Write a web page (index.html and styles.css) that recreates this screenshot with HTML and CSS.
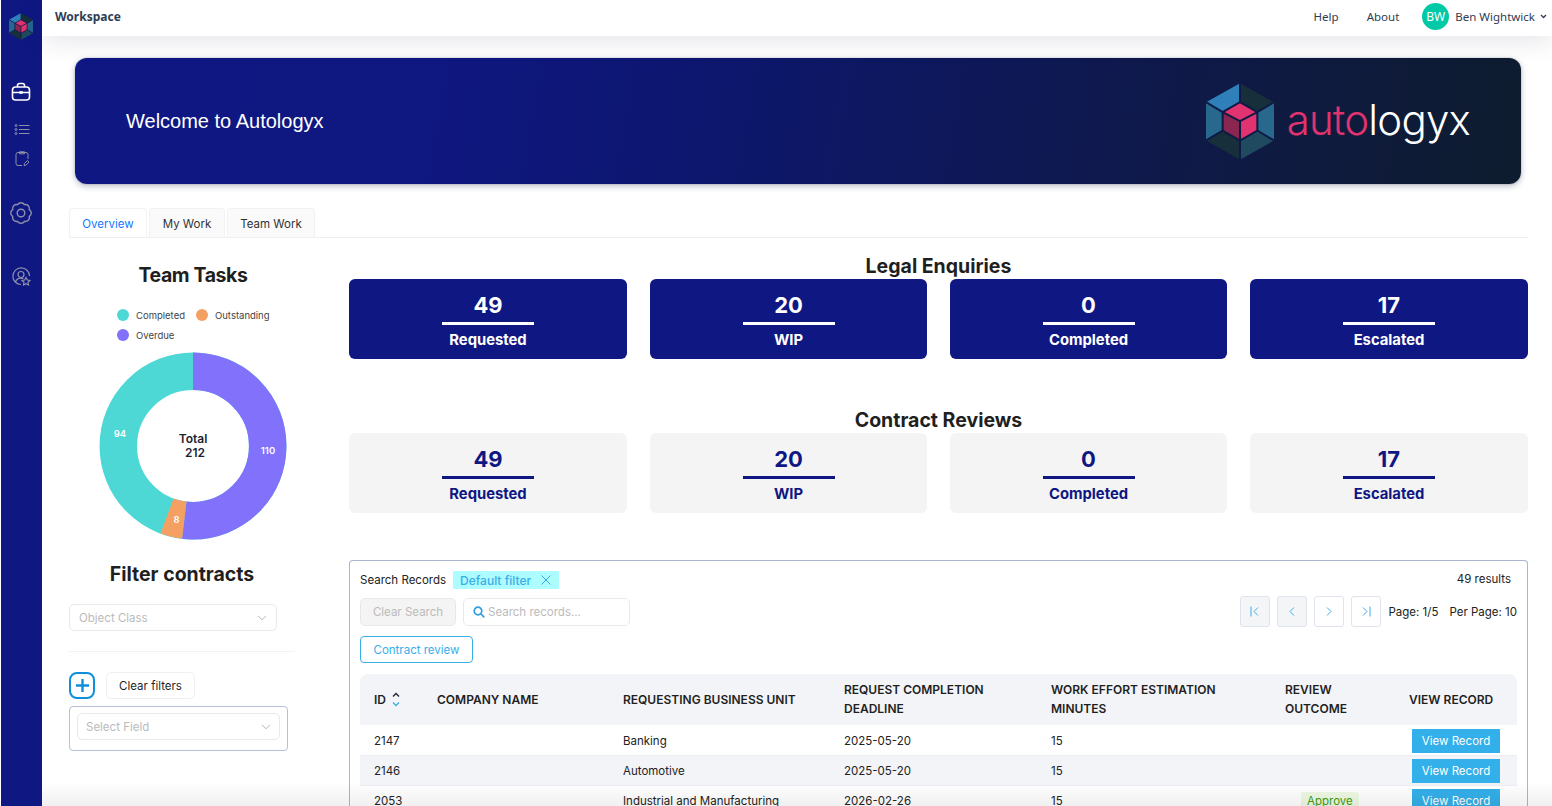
FILE: index.html
```html
<!DOCTYPE html>
<html lang="en">
<head>
    <meta charset="UTF-8">
    <meta name="viewport" content="width=device-width, initial-scale=1.0">
    <title>Workspace</title>
    <link rel="stylesheet" href="styles.css">
</head>
<body>
    <svg class="defs" width="0" height="0">
        <symbol id="hex-logo" viewBox="0 0 204 230">
            <path fill="#2f80ba" d="M102 0 0 57 50 87 102 57z"/>
            <path fill="#162f3a" d="M102 0 204 57 154 87 102 57z"/>
            <path fill="#27688c" d="M204 57V172L154 142V87z"/>
            <path fill="#1f4a60" d="M204 172 102 230V172L154 142z"/>
            <path fill="#162f3a" d="M0 172 102 230V172L50 142z"/>
            <path fill="#27688c" d="M0 57V172L50 142V87z"/>
            <path fill="#e0336f" d="M102 57 154 87 102 114 50 87z"/>
            <path fill="#8a2650" d="M50 87 102 114V172L50 142z"/>
            <path fill="#e0336f" d="M154 87 102 114V172L154 142z"/>
            <path fill="none" stroke="#0e1a45" stroke-width="6" d="M102 0V57M204 57 154 87M204 172 154 142M102 230V172M0 172 50 142M0 57 50 87M102 57 154 87V142L102 172 50 142V87zM50 87 102 114 154 87M102 114V172"/>
        </symbol>
    </svg>

    <div class="app">
        <aside class="sidebar">
            <svg class="side-logo" width="24" height="27"><use href="#hex-logo"/></svg>
            <svg class="side-icon icon-case" width="20" height="20" viewBox="0 0 20 20" fill="none" stroke="#fff" stroke-width="1.6">
                <rect x="1.5" y="5" width="17" height="13" rx="3"/>
                <path d="M6.5 5V3.5a2 2 0 0 1 2-2h3a2 2 0 0 1 2 2V5M1.5 10.5h17"/>
                <rect x="8.7" y="9.5" width="2.6" height="2" fill="#fff" stroke-width=".6"/>
            </svg>
            <svg class="side-icon icon-list" width="16" height="11" viewBox="0 0 16 11" fill="none" stroke="#8f90a8" stroke-width="1">
                <path d="M5 1.500h10.500M5 5.500h10.500M5 9.500h10.500"/>
                <circle cx="2" cy="1.500" r="1"/><circle cx="2" cy="5.500" r="1"/><circle cx="2" cy="9.500" r="1"/>
            </svg>
            <svg class="side-icon icon-clip" width="15" height="16" viewBox="0 0 15 16" fill="none" stroke="#8f90a8" stroke-width="1">
                <path d="M7 14.500H3a2 2 0 0 1-2-2V3.500a2 2 0 0 1 2-2h8a2 2 0 0 1 2 2V8"/>
                <path d="M4.500 .8h5v2h-5z"/>
                <path d="m9 14.500 .4-2 3-3 1.600 1.600-3 3z"/>
            </svg>
            <svg class="side-icon icon-gear" width="22" height="22" viewBox="0 0 22 22" fill="none" stroke="#8f90a8" stroke-width="1.400">
                <path d="M19.310 7.560A4 4 0 0 1 19.310 14.440 4 4 0 0 1 14.440 19.310 4 4 0 0 1 7.560 19.310 4 4 0 0 1 2.690 14.440 4 4 0 0 1 2.690 7.560 4 4 0 0 1 7.560 2.690 4 4 0 0 1 14.440 2.690 4 4 0 0 1 19.310 7.560z"/>
                <circle cx="11" cy="11" r="3.800"/>
            </svg>
            <svg class="side-icon icon-user" width="19" height="19" viewBox="0 0 19 19" fill="none" stroke="#8f90a8" stroke-width="1.200">
                <path d="M9 17.500A8.300 8.300 0 1 1 17.500 9"/>
                <circle cx="9" cy="7.500" r="3"/>
                <path d="M3.500 15c.8-2.500 2.800-3.800 5.500-3.800 1 0 1.600.1 2.300.4"/>
                <path d="m14 10.500 1.300 2.500 2.700.4-2 1.900.5 2.700-2.500-1.300-2.500 1.300.5-2.700-2-1.900 2.700-.4z"/>
            </svg>
        </aside>

        <div class="main">
            <header class="topbar">
                <span class="brand">Workspace</span>
                <nav class="topnav">
                    <a class="nav-help">Help</a>
                    <a class="nav-about">About</a>
                    <span class="avatar">BW</span>
                    <span class="username">Ben Wightwick</span>
                    <svg class="caret" width="7" height="5" viewBox="0 0 7 5" fill="none" stroke="#2f3c55" stroke-width="1.300"><path d="m1 1 2.500 2.500L6 1"/></svg>
                </nav>
            </header>

            <div class="content">
                <section class="banner">
                    <h1>Welcome to Autologyx</h1>
                    <div class="banner-logo">
                        <svg width="68" height="77"><use href="#hex-logo"/></svg>
                        <span class="wordmark"><span class="pink">auto</span>logyx</span>
                    </div>
                </section>

                <div class="tabs">
                    <div class="tab active">Overview</div>
                    <div class="tab">My Work</div>
                    <div class="tab tab-last">Team Work</div>
                </div>

                <div class="columns">
                    <div class="left">
                        <h2 class="chart-title">Team Tasks</h2>
                        <div class="legend">
                            <span class="legend-item"><i class="dot teal"></i>Completed</span>
                            <span class="legend-item"><i class="dot orange"></i>Outstanding</span>
                            <span class="legend-item"><i class="dot purple"></i>Overdue</span>
                        </div>
                        <svg class="donut" width="188" height="188" viewBox="0 0 188 188">
                            <g fill="none" stroke-width="37.500" transform="rotate(-90 94 94)">
                                <circle cx="94" cy="94" r="74.700" pathLength="212" stroke="#4dd8d6"/>
                                <circle cx="94" cy="94" r="74.700" pathLength="212" stroke="#8271fa" stroke-dasharray="110 102"/>
                                <circle cx="94" cy="94" r="74.700" pathLength="212" stroke="#f4a062" stroke-dasharray="8 204" stroke-dashoffset="-110"/>
                            </g>
                            <g class="donut-val">
                                <text x="21" y="85">94</text>
                                <text x="169" y="102">110</text>
                                <text x="77.500" y="171">8</text>
                            </g>
                            <g class="donut-total">
                                <text x="94" y="91">Total</text>
                                <text x="96" y="105">212</text>
                            </g>
                        </svg>

                        <div class="filters">
                            <h2 class="filter-title">Filter contracts</h2>
                            <div class="select select-class">
                                Object Class
                                <svg width="10" height="6" viewBox="0 0 10 6" fill="none" stroke="#b4b4b4"><path d="m1 .8 4 4 4-4"/></svg>
                            </div>
                            <hr class="divider">
                            <div class="filter-actions">
                                <button class="add-btn">
                                    <svg width="15" height="15" viewBox="0 0 15 15" stroke="#0f8fdb" stroke-width="2.400"><path d="M7.500 1v13M1 7.500h13"/></svg>
                                </button>
                                <button class="clear-btn">Clear filters</button>
                            </div>
                            <div class="field-box">
                                <div class="select">
                                    Select Field
                                    <svg width="10" height="6" viewBox="0 0 10 6" fill="none" stroke="#b4b4b4"><path d="m1 .8 4 4 4-4"/></svg>
                                </div>
                            </div>
                        </div>
                    </div>

                    <div class="right">
                        <h2 class="group-title">Legal Enquiries</h2>
                        <div class="cards">
                            <div class="card dark"><b>49</b><i></i><span>Requested</span></div>
                            <div class="card dark"><b>20</b><i></i><span>WIP</span></div>
                            <div class="card dark"><b>0</b><i></i><span>Completed</span></div>
                            <div class="card dark"><b>17</b><i></i><span>Escalated</span></div>
                        </div>

                        <h2 class="group-title second">Contract Reviews</h2>
                        <div class="cards">
                            <div class="card"><b>49</b><i></i><span>Requested</span></div>
                            <div class="card"><b>20</b><i></i><span>WIP</span></div>
                            <div class="card"><b>0</b><i></i><span>Completed</span></div>
                            <div class="card"><b>17</b><i></i><span>Escalated</span></div>
                        </div>

                        <div class="records">
                            <div class="records-top">
                                <span>Search Records</span>
                                <span class="chip">Default filter
                                    <svg width="10" height="10" viewBox="0 0 9 9" stroke="#3aaee8" stroke-width=".9"><path d="m.5.5 8 8M8.500.5l-8 8"/></svg>
                                </span>
                                <span class="results">49 results</span>
                            </div>
                            <div class="records-tools">
                                <button class="clear-search">Clear Search</button>
                                <div class="search-box">
                                    <svg width="12" height="12" viewBox="0 0 12 12" fill="none" stroke="#2f9fe0" stroke-width="1.700"><circle cx="5" cy="5" r="3.800"/><path d="m8 8 3.300 3.300"/></svg>
                                    Search records...
                                </div>
                                <div class="pager">
                                    <button class="page-btn off"><svg width="10" height="11" viewBox="0 0 10 11" fill="none" stroke="#3aaee8"><path d="M1 .5v10M8 1.500 4 5.500l4 4"/></svg></button>
                                    <button class="page-btn off"><svg width="6" height="11" viewBox="0 0 6 11" fill="none" stroke="#3aaee8"><path d="M5 1.500 1 5.500l4 4"/></svg></button>
                                    <button class="page-btn"><svg width="6" height="11" viewBox="0 0 6 11" fill="none" stroke="#3aaee8"><path d="m1 1.500 4 4-4 4"/></svg></button>
                                    <button class="page-btn"><svg width="10" height="11" viewBox="0 0 10 11" fill="none" stroke="#3aaee8"><path d="M9 .5v10M2 1.500l4 4-4 4"/></svg></button>
                                </div>
                                <span class="page-info">Page: 1/5</span>
                                <span class="page-info per">Per Page: 10</span>
                            </div>
                            <button class="type-btn">Contract review</button>

                            <table class="grid">
                                <colgroup>
                                    <col class="c-id"><col class="c-company"><col class="c-unit"><col class="c-date"><col class="c-effort"><col class="c-outcome"><col>
                                </colgroup>
                                <thead>
                                    <tr>
                                        <th>ID <svg class="sort" width="8" height="15" viewBox="0 0 8 15" fill="none" stroke-width="1.300"><path stroke="#1d2433" d="m1 4.500 3-3 3 3"/><path stroke="#3aaee8" d="m1 10.500 3 3 3-3"/></svg></th>
                                        <th>COMPANY NAME</th>
                                        <th>REQUESTING BUSINESS UNIT</th>
                                        <th>REQUEST COMPLETION DEADLINE</th>
                                        <th>WORK EFFORT ESTIMATION MINUTES</th>
                                        <th>REVIEW OUTCOME</th>
                                        <th>VIEW RECORD</th>
                                    </tr>
                                </thead>
                                <tbody>
                                    <tr>
                                        <td>2147</td><td></td><td>Banking</td><td>2025-05-20</td><td>15</td><td></td>
                                        <td><button class="view-btn">View Record</button></td>
                                    </tr>
                                    <tr class="alt">
                                        <td>2146</td><td></td><td>Automotive</td><td>2025-05-20</td><td>15</td><td></td>
                                        <td><button class="view-btn">View Record</button></td>
                                    </tr>
                                    <tr>
                                        <td>2053</td><td></td><td>Industrial and Manufacturing</td><td>2026-02-26</td><td>15</td>
                                        <td><span class="tag">Approve</span></td>
                                        <td><button class="view-btn">View Record</button></td>
                                    </tr>
                                </tbody>
                            </table>
                        </div>
                    </div>
                </div>
            </div>
        </div>
    </div>
    <div class="bottom-fade"></div>
</body>
</html>
```

FILE: styles.css
```css
* {
    box-sizing: border-box;
}
html, body {
    height: 806px;
    margin: 0;
    overflow: hidden;
}
body {
    background-color: #fff;
    font-family: Inter, sans-serif;
    color: #1f1f1f;
    position: relative;
}
h1, h2 {
    margin: 0;
}
button {
    font-family: inherit;
    cursor: pointer;
}
.defs {
    display: block;
    height: 0;
}
.app {
    display: flex;
    height: 806px;
    overflow: hidden;
}

/* sidebar */
.sidebar {
    width: 41px;
    margin-left: 1px;
    flex-shrink: 0;
    background-color: #0f1783;
    display: flex;
    flex-direction: column;
    align-items: center;
    padding-top: 13px;
}
.side-logo {
    margin-left: -2px;
}
.side-icon {
    display: block;
}
.icon-case {
    margin: 42px 0 0 -2px;
}
.icon-list {
    margin: 22px 0 0 1px;
}
.icon-clip {
    margin: 16px 0 0 1px;
}
.icon-gear {
    margin: 35px 0 0 -1px;
}
.icon-user {
    margin: 43px 0 0 0;
}

/* top bar */
.main {
    flex: 1;
    min-width: 0;
}
.topbar {
    height: 36px;
    display: flex;
    align-items: center;
    justify-content: space-between;
    padding: 0 5px 3px 13px;
    background-color: #fff;
    box-shadow: 0 4px 26px rgba(30, 40, 70, .13);
    position: relative;
    font-family: "Noto Sans", sans-serif;
    font-size: 11.5px;
    color: #2f3c55;
}
.brand {
    font-weight: 700;
    font-size: 12px;
}
.topnav {
    display: flex;
    align-items: center;
}
.nav-help {
    margin-right: 28px;
}
.nav-about {
    margin-right: 23px;
}
.avatar {
    width: 27px;
    height: 27px;
    border-radius: 50%;
    background-color: #00c9a7;
    color: #fff;
    font-size: 12px;
    display: flex;
    align-items: center;
    justify-content: center;
    margin-right: 6px;
}
.caret {
    margin-left: 5px;
}

/* banner */
.content {
    padding: 22px 24px 0 27px;
}
.banner {
    height: 126px;
    margin: 0 7px 0 6px;
    border-radius: 12px;
    background: linear-gradient(100deg, #0f1783 0%, #0f1780 25%, #0d1770 42%, #0e1858 62%, #0f1a42 82%, #0e1c2e 100%);
    box-shadow: 0 0 1px rgba(40, 50, 110, .8), 0 2px 6px rgba(20, 30, 60, .3);
    display: flex;
    align-items: center;
    justify-content: space-between;
    padding: 0 51px;
}
.banner h1 {
    font-family: "Liberation Sans", sans-serif;
    font-size: 20px;
    font-weight: 400;
    color: #fff;
}
.banner-logo {
    display: flex;
    align-items: center;
    gap: 13px;
}
.wordmark {
    font-size: 42px;
    font-weight: 350;
    color: #fff;
    letter-spacing: -.8px;
    margin-top: -3px;
}
.pink {
    color: #e0336f;
}

/* tabs */
.tabs {
    margin-top: 24px;
    height: 30px;
    display: flex;
    gap: 2px;
    border-bottom: 1px solid #f0f0f0;
    font-size: 11.5px;
}
.tab {
    width: 76px;
    height: 29px;
    display: flex;
    align-items: center;
    justify-content: center;
    padding-top: 2px;
    border: 1px solid #f2f2f2;
    border-bottom: none;
    border-radius: 4px 4px 0 0;
    background-color: #fafafa;
    color: #333;
}
.tab.active {
    width: 78px;
    background-color: #fff;
    color: #1677ff;
}
.tab-last {
    width: 88px;
}

/* layout below the tabs */
.columns {
    display: flex;
    gap: 32px;
}
.left {
    width: 248px;
    flex-shrink: 0;
}
.right {
    flex: 1;
    min-width: 0;
}
.chart-title, .filter-title, .group-title {
    font-size: 19.5px;
    font-weight: 700;
    line-height: 28px;
    text-align: center;
    color: #1f1f1f;
}
.chart-title {
    margin-top: 23px;
    letter-spacing: -.4px;
}
.legend {
    display: flex;
    flex-wrap: wrap;
    width: 170px;
    margin: 16px 0 0 48px;
    font-size: 9.5px;
    color: #444;
}
.legend-item {
    display: flex;
    align-items: center;
    height: 20px;
    margin-right: 11px;
}
.dot {
    width: 12px;
    height: 12px;
    border-radius: 50%;
    margin-right: 7px;
}
.teal {
    background-color: #4dd8d6;
}
.orange {
    background-color: #f4a062;
}
.purple {
    background-color: #8271fa;
}
.donut {
    display: block;
    margin: 7px 0 0 30px;
}
.donut-val {
    fill: #fff;
    font-size: 9.5px;
    font-weight: 600;
    text-anchor: middle;
}
.donut-total {
    fill: #1d2433;
    font-size: 12px;
    font-weight: 600;
    text-anchor: middle;
}

/* filters */
.filters {
    width: 226px;
}
.filter-title {
    margin-top: 20px;
}
.select {
    height: 27px;
    border: 1px solid #e8e8ee;
    border-radius: 5px;
    display: flex;
    align-items: center;
    justify-content: space-between;
    padding: 0 9px;
    font-size: 11.5px;
    color: #bbb;
}
.select-class {
    width: 208px;
    margin-top: 16px;
}
.divider {
    border: none;
    border-top: 1px solid #f2f2f2;
    margin: 20px 0;
}
.filter-actions {
    display: flex;
    gap: 11px;
}
.add-btn {
    width: 26px;
    height: 27px;
    padding: 0;
    border: 2px solid #0f8fdb;
    border-radius: 8px;
    background-color: #fff;
    display: flex;
    align-items: center;
    justify-content: center;
}
.clear-btn {
    width: 89px;
    height: 27px;
    padding: 0;
    border: 1px solid #f0f0f0;
    border-radius: 5px;
    background-color: #fff;
    font-size: 11.5px;
    color: #1f1f1f;
}
.field-box {
    width: 219px;
    height: 45px;
    margin-top: 7px;
    padding: 6px 7px;
    border: 1px solid #b5bfdc;
    border-radius: 4px;
}
.field-box .select {
    padding: 0 8px;
}

/* cards */
.group-title {
    line-height: 26px;
    margin-top: 15px;
}
.group-title.second {
    margin-top: 48px;
}
.cards {
    display: grid;
    grid-template-columns: 278px 277px 277px 278px;
    gap: 23px;
}
.card {
    height: 80px;
    border-radius: 6px;
    background-color: #f4f4f5;
    color: #0f1783;
    display: flex;
    flex-direction: column;
    align-items: center;
    padding-top: 13px;
}
.card.dark {
    background-color: #0f1783;
    color: #fff;
}
.card b {
    font-size: 22px;
    font-weight: 700;
    line-height: 26px;
}
.card i {
    width: 92px;
    height: 3px;
    margin-top: 4px;
    background-color: currentColor;
}
.card span {
    font-size: 14.8px;
    font-weight: 700;
    line-height: 20px;
    margin-top: 5px;
}

/* records panel */
.records {
    margin-top: 47px;
    height: 260px;
    overflow: hidden;
    padding: 10px;
    border: 1px solid #aab4d0;
    border-bottom: none;
    border-radius: 4px 4px 0 0;
    font-size: 11.5px;
}
.records-top {
    height: 18px;
    display: flex;
    align-items: center;
    color: #222;
}
.chip {
    height: 18px;
    margin-left: 7px;
    padding: 0 8px 0 7px;
    display: flex;
    align-items: center;
    gap: 10px;
    background-color: #adfcff;
    color: #3aaee8;
    font-size: 12px;
    font-weight: 500;
}
.results {
    margin-left: auto;
    margin-right: 6px;
    margin-top: -2px;
}
.records-tools {
    display: flex;
    align-items: center;
    margin-top: 7px;
}
.clear-search {
    width: 96px;
    height: 28px;
    padding: 0;
    border: 1px solid #e8e8e8;
    border-radius: 5px;
    background-color: #f4f4f4;
    color: #bbb;
    font-size: 11.5px;
}
.search-box {
    width: 167px;
    height: 28px;
    margin-left: 7px;
    padding-left: 9px;
    display: flex;
    align-items: center;
    gap: 3px;
    border: 1px solid #e8e8ee;
    border-radius: 5px;
    color: #bbb;
}
.pager {
    margin-left: auto;
    display: flex;
    gap: 7px;
}
.page-btn {
    width: 30px;
    height: 31px;
    padding: 0;
    border: 1px solid #dfe3ee;
    border-radius: 3px;
    background-color: #fff;
    display: flex;
    align-items: center;
    justify-content: center;
}
.page-btn.off {
    background-color: #f4f5f7;
}
.page-info {
    margin-left: 7px;
    color: #222;
}
.page-info.per {
    margin-left: 11px;
}
.type-btn {
    display: block;
    width: 113px;
    height: 27px;
    margin-top: 9px;
    padding: 0;
    border: 1px solid #39aee8;
    border-radius: 4px;
    background-color: #fff;
    color: #39aee8;
    font-size: 11.5px;
}

/* table */
.grid {
    width: 100%;
    margin-top: 11px;
    border-collapse: collapse;
    table-layout: fixed;
}
.c-id {
    width: 63px;
}
.c-company {
    width: 186px;
}
.c-unit {
    width: 221px;
}
.c-date {
    width: 207px;
}
.c-effort {
    width: 234px;
}
.c-outcome {
    width: 124px;
}
.grid th {
    height: 51px;
    padding: 0 14px 1px;
    background-color: #f3f4f8;
    text-align: left;
    font-size: 12px;
    font-weight: 600;
    line-height: 19px;
    color: #1f1f1f;
}
.grid th:first-child {
    border-radius: 8px 0 0 0;
}
.grid th:last-child {
    border-radius: 0 8px 0 0;
}
.sort {
    vertical-align: middle;
    margin: -2px 0 0 3px;
}
.grid td {
    height: 30px;
    padding: 2px 14px 0;
    border-bottom: 1px solid #eceef3;
    color: #222;
}
.alt td {
    background-color: #f3f4f8;
}
.view-btn {
    display: block;
    width: 88px;
    height: 24px;
    margin-left: 3px;
    padding: 0;
    border: none;
    background-color: #33afe9;
    color: #fff;
    font-size: 11.5px;
}
.tag {
    display: inline-block;
    margin-left: 16px;
    padding: 2px 6px;
    border-radius: 3px;
    background-color: #eef9e4;
    color: #3fa00f;
}

/* grey fade along the bottom of the window */
.bottom-fade {
    position: absolute;
    left: 42px;
    right: 0;
    bottom: 0;
    height: 24px;
    background: linear-gradient(rgba(0, 0, 0, 0), rgba(0, 0, 0, .06));
    pointer-events: none;
}
```
